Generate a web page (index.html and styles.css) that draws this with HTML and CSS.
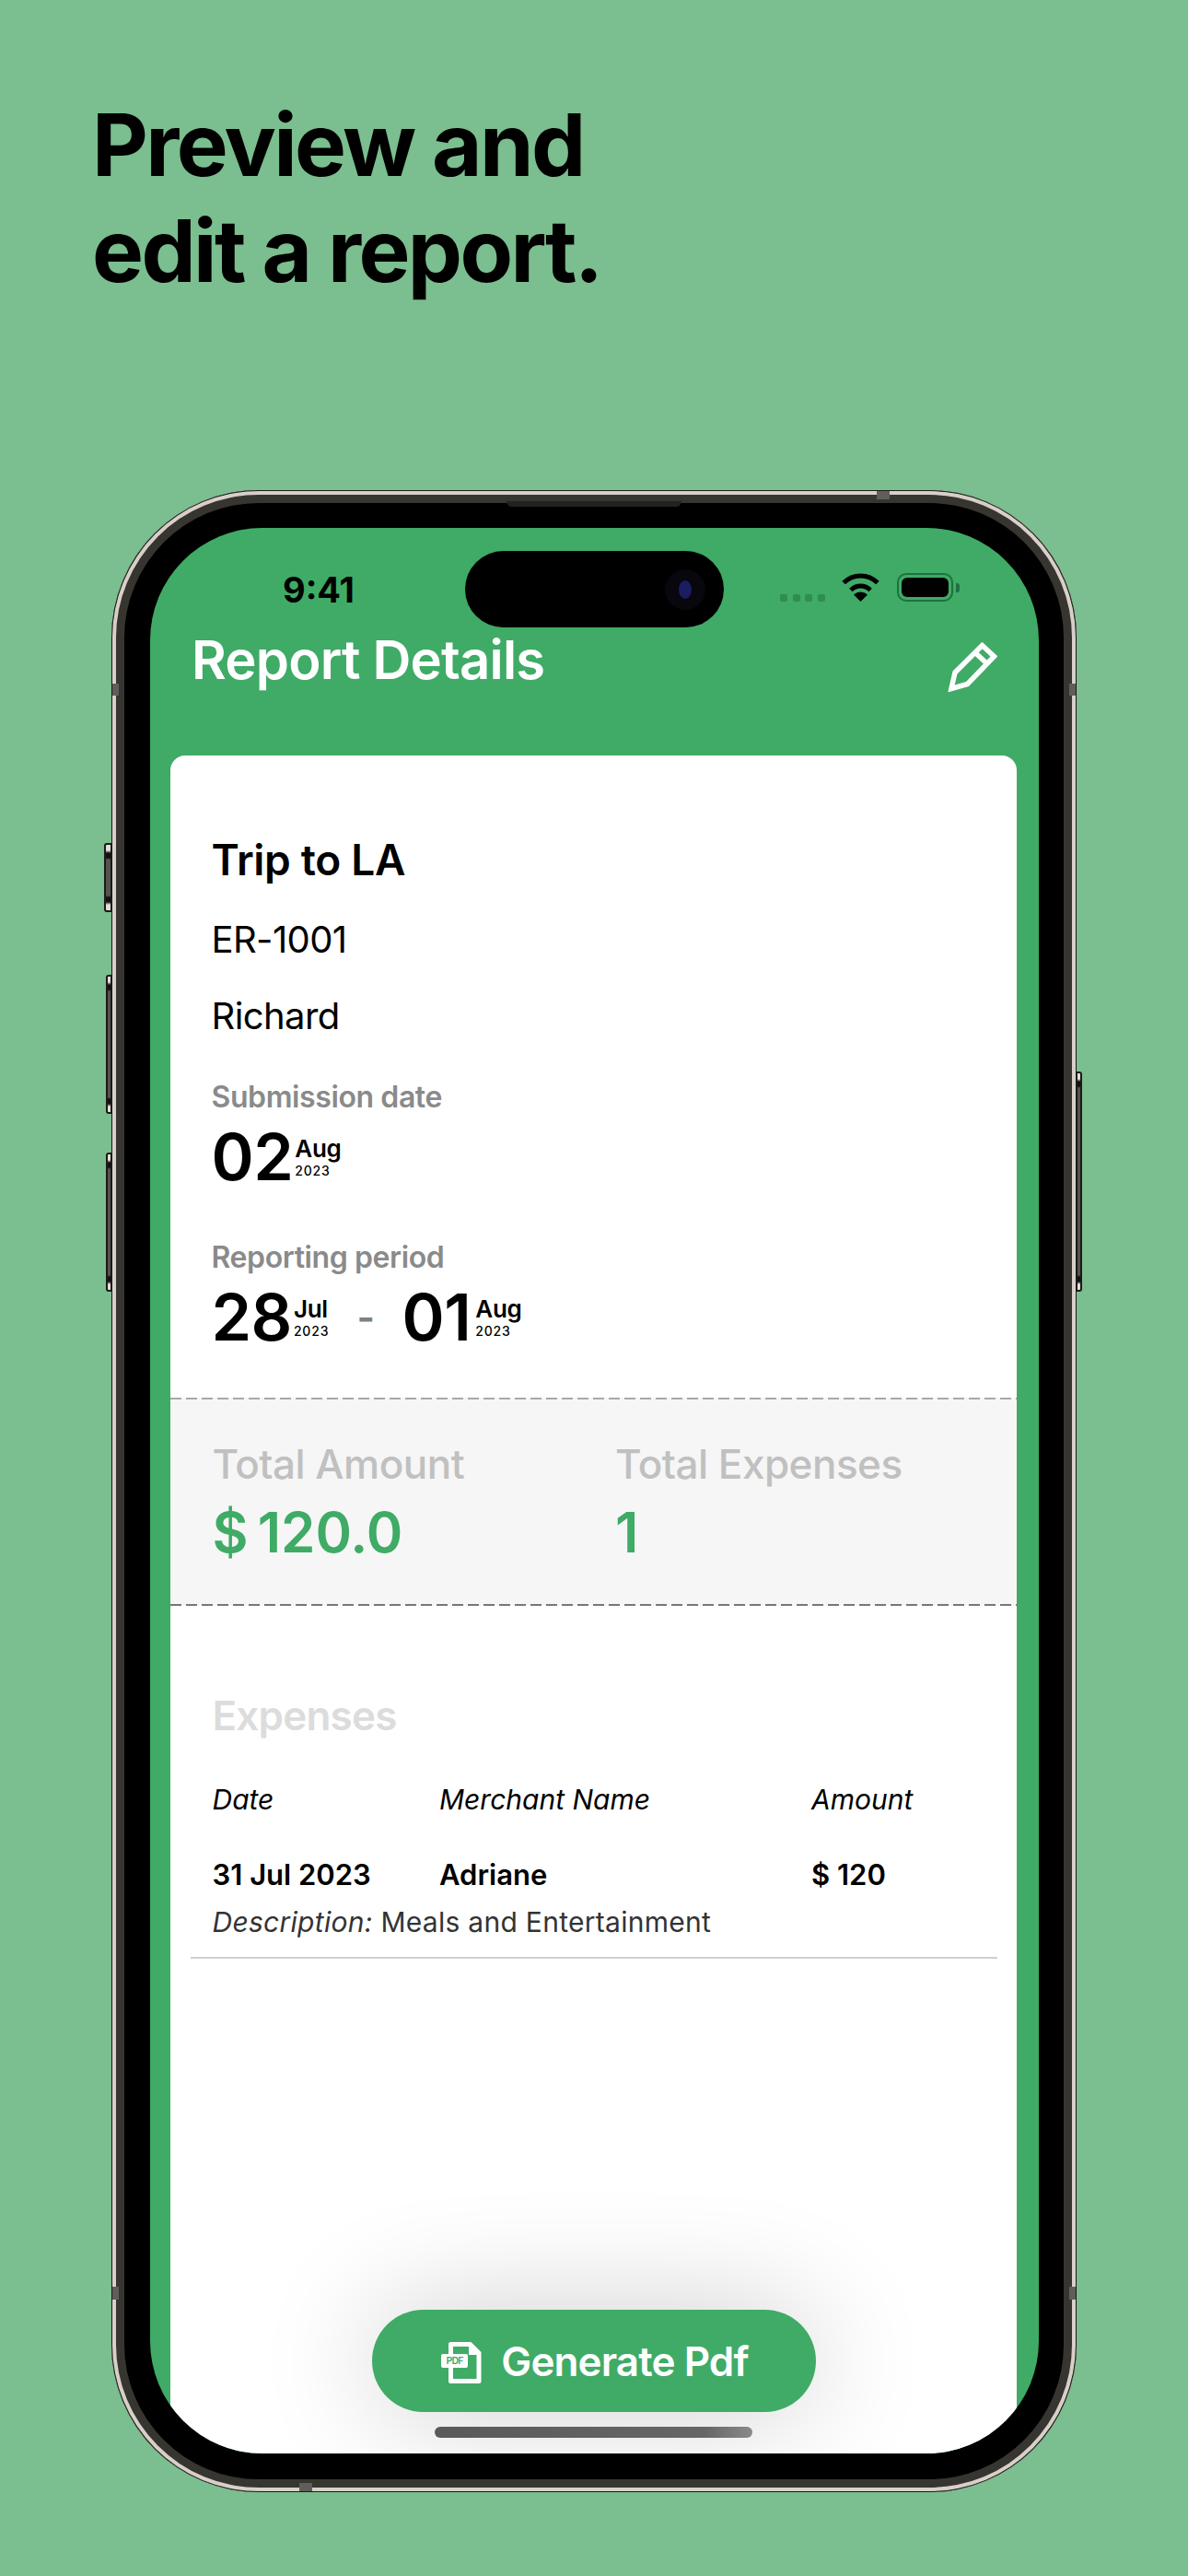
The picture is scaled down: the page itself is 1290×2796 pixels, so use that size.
FILE: index.html
```html
<!DOCTYPE html>
<html lang="en">
<head>
<meta charset="utf-8">
<title>Preview and edit a report</title>
<link rel="stylesheet" href="styles.css">
</head>
<body>
<h1 class="headline">Preview and<br>edit a report.</h1>
<div class="phone">
  <span class="hw hw-action"></span>
  <span class="hw hw-vol-up"></span>
  <span class="hw hw-vol-down"></span>
  <span class="hw hw-power"></span>
  <span class="speaker"></span>
  <span class="band band-top"></span>
  <span class="band band-left1"></span>
  <span class="band band-right1"></span>
  <span class="band band-left2"></span>
  <span class="band band-right2"></span>
  <span class="band band-bottom"></span>
  <div class="screen">
    <div class="statusbar">
      <div class="time">9:41</div>
      <div class="island"><span class="camera"><span class="lens"></span></span></div>
      <div class="status-icons">
        <div class="signal"><i></i><i></i><i></i><i></i></div>
        <svg class="wifi" viewBox="0 0 43 31" width="43" height="31" aria-hidden="true">
          <path d="M3.1 10.6A26 26 0 0 1 39.9 10.6M10.9 18.4A15 15 0 0 1 32.1 18.4" fill="none" stroke="#000" stroke-width="5"/>
          <path d="M21.5 31L14 23.5A11 11 0 0 1 29 23.5Z" fill="#000"/>
        </svg>
        <div class="battery"><span class="battery-fill"></span></div>
        <span class="battery-nub"></span>
      </div>
    </div>
    <header class="navbar">
      <div class="nav-title">Report Details</div>
      <svg class="pencil" viewBox="0 0 54 54" width="54" height="54" aria-hidden="true">
        <path d="M37.5 3.5L50.5 15.5L21.5 45.5L4 50.5L8 33Z" fill="none" stroke="#fff" stroke-width="5.5" stroke-linejoin="miter"/>
        <path d="M29.5 11L44 24.5" fill="none" stroke="#fff" stroke-width="5.5"/>
      </svg>
    </header>
    <main class="card">
      <section class="info">
        <div class="trip">Trip to LA</div>
        <div class="plain first">ER-1001</div>
        <div class="plain second">Richard</div>
        <div class="label label-sub">Submission date</div>
        <div class="dates">
          <div class="date">
            <div class="day">02</div>
            <div class="monthyear"><div class="month">Aug</div><div class="year">2023</div></div>
          </div>
        </div>
        <div class="label label-rep">Reporting period</div>
        <div class="dates">
          <div class="date date-from">
            <div class="day">28</div>
            <div class="monthyear"><div class="month">Jul</div><div class="year">2023</div></div>
          </div>
          <div class="dash">-</div>
          <div class="date date-to">
            <div class="day">01</div>
            <div class="monthyear"><div class="month">Aug</div><div class="year">2023</div></div>
          </div>
        </div>
      </section>
      <section class="totals">
        <div class="total">
          <div class="total-label">Total Amount</div>
          <div class="total-value">$ 120.0</div>
        </div>
        <div class="total">
          <div class="total-label">Total Expenses</div>
          <div class="total-value">1</div>
        </div>
      </section>
      <section class="expenses">
        <div class="expenses-title">Expenses</div>
        <div class="row row-head"><div>Date</div><div>Merchant Name</div><div>Amount</div></div>
        <div class="expense-item">
          <div class="row row-body"><div>31 Jul 2023</div><div>Adriane</div><div>$ 120</div></div>
          <div class="desc"><em>Description:</em> Meals and Entertainment</div>
        </div>
      </section>
      <button class="generate" type="button">
        <svg class="pdf" viewBox="0 0 44 45" width="44" height="45" aria-hidden="true">
          <path d="M10.5 2.5H31.5L41 12V42.5H10.5Z" fill="none" stroke="#fff" stroke-width="5" stroke-linejoin="round"/>
          <path d="M30 2V14H42V11L32 1Z" fill="#fff"/>
          <rect x="0" y="13" width="29" height="15" rx="2" fill="#fff"/>
          <text class="pdf-text" x="14.5" y="24.3" text-anchor="middle">PDF</text>
        </svg>
        <span>Generate Pdf</span>
      </button>
      <div class="home"></div>
    </main>
  </div>
</div>
</body>
</html>
```

FILE: styles.css
```css
* { box-sizing: border-box; }
html, body { margin: 0; padding: 0; }
body {
  width: 1290px;
  height: 2796px;
  overflow: hidden;
  background: #7bbe8f;
  font-family: Inter, "Liberation Sans", sans-serif;
  color: #000;
  padding-top: 100px;
}
.headline {
  margin: 0 0 0 100px;
  font-size: 94px;
  line-height: 115px;
  font-weight: 700;
  letter-spacing: -2.6px;
}
.phone {
  position: relative;
  width: 1048px;
  height: 2173px;
  margin: 202px 0 0 121px;
  padding: 41px 41.5px 42px 42px;
  border-radius: 160px;
  background: #000;
  box-shadow: inset 0 0 0 1px #1a1a18, inset 0 0 0 5px #d8d0c8, inset 0 0 0 14px #37352f;
}
.hw {
  position: absolute;
  background: linear-gradient(#e4ddd4 0, #e4ddd4 6px, #111 9px, #111 14px, #55534e 16px, #55534e calc(100% - 16px), #111 calc(100% - 14px), #111 calc(100% - 9px), #e4ddd4 calc(100% - 6px), #e4ddd4 100%);
  border: 2px solid #1b1a18;
}
.hw-action { left: -8px; top: 383px; width: 9px; height: 75px; border-radius: 3px 0 0 3px; }
.hw-vol-up { left: -6px; top: 526px; width: 7px; height: 151px; border-radius: 3px 0 0 3px; }
.hw-vol-down { left: -6px; top: 719px; width: 7px; height: 151px; border-radius: 3px 0 0 3px; }
.hw-power { right: -6px; top: 631px; width: 7px; height: 239px; border-radius: 0 3px 3px 0; }
.speaker {
  position: absolute;
  left: 429px;
  top: 12px;
  width: 190px;
  height: 6px;
  background: #222220;
  border-radius: 0 0 6px 6px;
}
.band { position: absolute; background: #5f5e5c; }
.band-top { left: 831px; top: 1px; width: 14px; height: 9px; }
.band-left1 { left: 1px; top: 210px; width: 7px; height: 13px; }
.band-right1 { right: 1px; top: 210px; width: 7px; height: 13px; }
.band-left2 { left: 1px; top: 1950px; width: 7px; height: 14px; }
.band-right2 { right: 1px; top: 1950px; width: 7px; height: 14px; }
.band-bottom { left: 204px; bottom: 1px; width: 14px; height: 9px; }
.screen {
  position: relative;
  display: flex;
  flex-direction: column;
  height: 100%;
  overflow: hidden;
  background: #3fab66;
  border-radius: 122px;
}
.statusbar {
  display: flex;
  align-items: flex-start;
  height: 108px;
  padding-top: 25px;
  flex: none;
}
.time {
  width: 341.5px;
  padding: 19px 0 0 144px;
  font-size: 38px;
  line-height: 46px;
  font-weight: 700;
}
.island {
  display: flex;
  align-items: center;
  justify-content: flex-end;
  width: 281.5px;
  height: 83px;
  padding-right: 20px;
  border-radius: 42px;
  background: #000;
}
.camera {
  display: flex;
  align-items: center;
  justify-content: center;
  width: 44px;
  height: 44px;
  border-radius: 50%;
  background: #07070d;
}
.lens {
  width: 14px;
  height: 20px;
  border-radius: 50%;
  background: #1c1c63;
}
.status-icons {
  display: flex;
  align-items: flex-start;
  padding: 24px 0 0 61px;
}
.signal { display: flex; gap: 5.5px; margin-top: 23px; }
.signal i { display: block; width: 8px; height: 8px; border-radius: 2px; background: #2f8d53; }
.wifi { margin: 0 0 0 17px; }
.battery {
  width: 61px;
  height: 31px;
  margin-left: 18px;
  padding: 3px;
  border: 2px solid #1f7040;
  border-radius: 10px;
}
.battery-fill { display: block; height: 100%; background: #000; border-radius: 6px; }
.battery-nub { width: 4px; height: 10px; margin: 11px 0 0 3px; border-radius: 0 3px 3px 0; background: #1f7040; }
.navbar {
  display: flex;
  align-items: flex-start;
  justify-content: space-between;
  height: 139px;
  padding: 1px 45px 0 45px;
  flex: none;
}
.nav-title {
  font-size: 58px;
  line-height: 68px;
  font-weight: 600;
  color: #fff;
  letter-spacing: -0.8px;
}
.pencil { margin-top: 15px; }
.card {
  position: relative;
  flex: 1;
  margin: 0 23.5px 0 22px;
  background: #fff;
  border-radius: 16px 16px 0 0;
}
.info { padding: 84px 44.5px 52px; }
.trip { font-size: 46px; line-height: 58px; font-weight: 600; letter-spacing: -0.3px; }
.plain { font-size: 40px; line-height: 48px; font-weight: 400; letter-spacing: -0.6px; }
.first { margin-top: 34px; }
.second { margin-top: 35px; }
.label { font-size: 32px; line-height: 40px; font-weight: 600; color: #8a8a8a; letter-spacing: -0.4px; }
.label-sub { margin-top: 43.5px; }
.label-rep { margin-top: 53.5px; }
.dates { display: flex; align-items: flex-start; margin-top: 10.5px; }
.date { display: flex; gap: 2px; }
.date-from { width: 158px; }
.date-to { gap: 5px; }
.day { font-size: 70px; line-height: 70px; font-weight: 600; letter-spacing: -0.5px; }
.monthyear { padding-top: 11px; }
.month { font-size: 26px; line-height: 30px; font-weight: 600; letter-spacing: -0.3px; }
.year { margin-top: 1px; font-size: 14px; line-height: 16px; font-weight: 500; letter-spacing: 0.8px; }
.dash { width: 49px; font-size: 42px; line-height: 70px; font-weight: 600; color: #808080; }
.totals {
  display: grid;
  grid-template-columns: 437.5px 1fr;
  height: 226px;
  padding: 45px 0 0 45.5px;
  background-color: #f6f6f6;
  background-image:
    repeating-linear-gradient(90deg, #a8a8a8 0, #a8a8a8 12px, transparent 12px, transparent 17px),
    repeating-linear-gradient(90deg, #777 0, #777 12px, transparent 12px, transparent 17px);
  background-size: 100% 2px, 100% 2px;
  background-position: 0 0, 0 100%;
  background-repeat: no-repeat;
}
.total-label { font-size: 44px; line-height: 54px; font-weight: 500; color: #c0c0c0; letter-spacing: -0.5px; }
.total-value { margin-top: 9px; font-size: 60px; line-height: 76px; font-weight: 600; color: #3fab66; word-spacing: -5px; }
.expenses { padding: 92px 21px 0 22px; }
.expenses-title { padding-left: 23.5px; font-size: 44px; line-height: 54px; font-weight: 600; color: #dcdcdc; letter-spacing: -0.8px; }
.row { display: grid; grid-template-columns: 246.5px 404px 1fr; padding-left: 23.5px; }
.row-head { margin-top: 45.5px; font-size: 30px; line-height: 36px; font-style: italic; }
.row-body { margin-top: 45.2px; font-size: 31px; line-height: 38px; font-weight: 600; }
.expense-item { padding-bottom: 20.5px; border-bottom: 2px solid #d0d0d0; }
.desc { margin-top: 14px; padding-left: 23.5px; font-size: 30px; line-height: 36px; color: #333; letter-spacing: 0.28px; }
.generate {
  position: absolute;
  left: 219px;
  bottom: 45px;
  display: flex;
  align-items: center;
  justify-content: center;
  gap: 21px;
  width: 482px;
  height: 111px;
  padding: 0 0 0 2px;
  border: 0;
  border-radius: 56px;
  background: #3fab66;
  color: #fff;
  font: 600 44px/54px Inter, "Liberation Sans", sans-serif;
  letter-spacing: -0.9px;
  box-shadow: 0 0 130px rgba(0, 0, 0, 0.2);
}
.pdf { margin-top: 4px; }
.pdf-text { font: 600 10.5px Inter, sans-serif; fill: #3fab66; }
.home {
  position: absolute;
  left: 287px;
  bottom: 17px;
  width: 345px;
  height: 12px;
  border-radius: 6px;
  background: linear-gradient(90deg, #5a5a5a, #666 85%, #8a8a8a);
}
```
